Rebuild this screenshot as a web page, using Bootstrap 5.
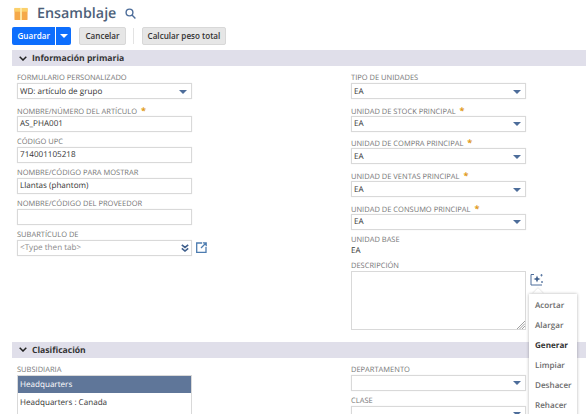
<!DOCTYPE html>
<html lang="es">
  <head>
    <meta charset="UTF-8" />
    <meta name="viewport" content="width=device-width, initial-scale=1.0" />
    <link href="https://cdn.jsdelivr.net/npm/bootstrap@5.3.3/dist/css/bootstrap.min.css" rel="stylesheet" />
    <title>Ensamblaje</title>
    <style>
      html, body { height: 414px; overflow: hidden; }
      body { font-family: "Open Sans", "Liberation Sans", sans-serif; font-size: 8px; color: #333; background: #fff; text-rendering: geometricPrecision; }
      .page-wrap { padding: 0 0 0 12px; position: relative; height: 414px; overflow: hidden; }
      .title-row { height: 27px; padding-left: 2px; gap: 9px; }
      .page-title { font-size: 14.3px; font-weight: 600; color: #4d5f79; margin: 0; line-height: 27px; }
      .btn-row { height: 18px; gap: 8px; }
      .btn-ns { font-family: inherit; font-size: 8.1px; font-weight: 600; line-height: 1; height: 18px; padding: 1px 5px 0; border-radius: 2px; border: 1px solid #d8d8d8; background: #e6e6e6; color: #333; }
      .btn-save { background: #0d6efd; border: 0; color: #fff; height: 18px; font-size: 8.1px; font-weight: 600; padding: 1px 5.5px 0; border-radius: 2px 0 0 2px; line-height: 1; }
      .btn-caret { background: #0d6efd; border: 0; border-left: 1px solid #fff; height: 18px; width: 16px; padding: 0; border-radius: 0 2px 2px 0; display: flex; align-items: center; justify-content: center; }
      .btn-sep { width: 1px; height: 16px; background: #e3e3e3; margin: 0 0 0 -1px; }
      .section-bar { height: 16px; background: #e0dfea; font-weight: 700; font-size: 8.6px; color: #333; gap: 5px; padding-left: 7px; }
      .section-name { padding-top: 1px; }
      .first-bar { margin-top: 5px; }
      .second-bar { margin-top: 11.5px; }
      .form-cols { padding-left: 5px; padding-top: 6px; }
      .col-left { width: 334px; flex: none; }
      .col-right { width: 205px; flex: none; }
      .ns-label { font-size: 7.5px; color: #757575; line-height: 13px; height: 11px; text-transform: uppercase; white-space: nowrap; }
      .ns-label-req { height: 12.7px; padding-top: .7px; }
      .ns-label b { color: #e09a1a; font-weight: 700; margin-left: 2px; font-size: 9px; }
      .ns-field { width: 175px; height: 16px; border: 1px solid #d9d9d9; box-shadow: 0 0 1px #e4e4e4; background: #fff; font-size: 8.1px; line-height: 14px; padding: 1px 2px 0; color: #333; white-space: nowrap; justify-content: space-between; align-items: center; display: flex; }
      .ns-group { margin-bottom: 4px; }
      .ns-arrow { width: 0; height: 0; border-left: 4px solid transparent; border-right: 4px solid transparent; border-top: 4px solid #4d6d9a; margin-right: 2px; }
      .ns-hint { color: #8a8a8a; }
      .ns-textarea { width: 175px; height: 59px; border: 1px solid #d9d9d9; position: relative; }
      .ns-grip { position: absolute; right: 0; bottom: 0; }
      .sub-list { width: 175px; border: 1px solid #d9d9d9; border-bottom: 0; height: 60px; }
      .sub-item { height: 17px; line-height: 18px; padding: 0 2px; font-size: 8.1px; }
      .sub-item-on { background: #5f7699; color: #fff; }
      .sub-item + .sub-item { line-height: 19px; height: 18px; }
      .ai-menu { position: absolute; left: 529px; top: 294px; width: 48px; height: 130px; background: #fff; box-shadow: 0 0 3px rgba(0,0,0,.3); padding: 2px 0 0 6px; font-size: 8.1px; font-weight: 600; color: #6b6b6b; }
      .ai-menu div { height: 20px; line-height: 20px; white-space: nowrap; }
      .ai-menu .ai-on { color: #333; font-weight: 700; }
      .ai-tip { position: absolute; left: 534px; top: 290px; width: 8px; height: 8px; background: #fff; transform: rotate(45deg); box-shadow: -1px -1px 1px rgba(0,0,0,.08); }
      .ai-icon { position: absolute; left: 530px; top: 273px; }
      .base-value { height: 15.5px; line-height: 11px; }
    </style>
  </head>
  <body>
    <div class="page-wrap">
      <div class="d-flex align-items-center title-row">
        <svg width="14" height="14" viewBox="0 0 15 15">
          <rect x="0.5" y="1" width="14" height="13" rx="1" fill="#f5a94a" />
          <rect x="0.5" y="1" width="14" height="4" fill="#fbd06a" />
          <rect x="6.5" y="1" width="2" height="13" fill="#fde9a8" />
        </svg>
        <h1 class="page-title">Ensamblaje</h1>
        <svg width="11" height="11" viewBox="0 0 11 11" fill="none" stroke="#4d6d9a" stroke-width="1.4">
          <circle cx="4.5" cy="4.5" r="3.4" />
          <path d="M7 7l3.4 3.4" />
        </svg>
      </div>
      <div class="d-flex align-items-center btn-row">
        <div class="d-flex">
          <button type="button" class="btn-save">Guardar</button>
          <button type="button" class="btn-caret" aria-label="Más">
            <svg width="8" height="4" viewBox="0 0 8 4"><path d="M0 0h8L4 4z" fill="#fff" /></svg>
          </button>
        </div>
        <button type="button" class="btn-ns">Cancelar</button>
        <span class="btn-sep"></span>
        <button type="button" class="btn-ns">Calcular peso total</button>
      </div>

      <div class="d-flex align-items-center section-bar first-bar">
        <svg width="8" height="5" viewBox="0 0 8 5" fill="none" stroke="#222" stroke-width="1.5"><path d="M.7.7L4 4l3.3-3.3" /></svg>
        <span class="section-name">Información primaria</span>
      </div>

      <div class="d-flex form-cols">
        <div class="col-left">
          <div class="ns-group">
            <div class="ns-label">Formulario personalizado</div>
            <div class="ns-field">WD: artículo de grupo<span class="ns-arrow"></span></div>
          </div>
          <div class="ns-group">
            <div class="ns-label ns-label-req">Nombre/número del artículo <b>*</b></div>
            <div class="ns-field">AS_PHA001</div>
          </div>
          <div class="ns-group">
            <div class="ns-label">Código UPC</div>
            <div class="ns-field">714001105218</div>
          </div>
          <div class="ns-group">
            <div class="ns-label">Nombre/código para mostrar</div>
            <div class="ns-field">Llantas (phantom)</div>
          </div>
          <div class="ns-group">
            <div class="ns-label">Nombre/código del proveedor</div>
            <div class="ns-field"></div>
          </div>
          <div class="ns-group">
            <div class="ns-label">Subartículo de</div>
            <div class="d-flex align-items-center gap-1">
              <div class="ns-field"><span class="ns-hint">&lt;Type then tab&gt;</span>
                <svg width="8" height="8" viewBox="0 0 8 8" fill="none" stroke="#3f5f8c" stroke-width="1.6"><path d="M.8.8L4 3.4 7.2.8M.8 4.4L4 7 7.2 4.4" /></svg>
              </div>
              <svg width="11" height="11" viewBox="0 0 11 11" fill="none" stroke="#4d7cb0" stroke-width="1.3"><path d="M6 1H.7v9.3H10V5M5 6l5-5M6.8 .8h3.4v3.4" /></svg>
            </div>
          </div>
        </div>
        <div class="col-right">
          <div class="ns-group">
            <div class="ns-label">Tipo de unidades</div>
            <div class="ns-field">EA<span class="ns-arrow"></span></div>
          </div>
          <div class="ns-group">
            <div class="ns-label ns-label-req">Unidad de stock principal <b>*</b></div>
            <div class="ns-field">EA<span class="ns-arrow"></span></div>
          </div>
          <div class="ns-group">
            <div class="ns-label ns-label-req">Unidad de compra principal <b>*</b></div>
            <div class="ns-field">EA<span class="ns-arrow"></span></div>
          </div>
          <div class="ns-group">
            <div class="ns-label ns-label-req">Unidad de ventas principal <b>*</b></div>
            <div class="ns-field">EA<span class="ns-arrow"></span></div>
          </div>
          <div class="ns-group">
            <div class="ns-label ns-label-req">Unidad de consumo principal <b>*</b></div>
            <div class="ns-field">EA<span class="ns-arrow"></span></div>
          </div>
          <div class="ns-label">Unidad base</div>
          <div class="base-value">EA</div>
          <div class="ns-label">Descripción</div>
          <div class="ns-textarea">
            <svg class="ns-grip" width="9" height="9" viewBox="0 0 9 9" stroke="#777" stroke-width=".7"><path d="M9 1L1 9M9 3.5L3.5 9M9 6L6 9" /></svg>
          </div>
        </div>
      </div>

      <div class="d-flex align-items-center section-bar second-bar">
        <svg width="8" height="5" viewBox="0 0 8 5" fill="none" stroke="#222" stroke-width="1.5"><path d="M.7.7L4 4l3.3-3.3" /></svg>
        <span class="section-name">Clasificación</span>
      </div>

      <div class="d-flex form-cols">
        <div class="col-left">
          <div class="ns-label">Subsidiaria</div>
          <div class="sub-list">
            <div class="sub-item sub-item-on">Headquarters</div>
            <div class="sub-item">Headquarters : Canada</div>
          </div>
        </div>
        <div class="col-right">
          <div class="ns-group">
            <div class="ns-label">Departamento</div>
            <div class="ns-field"><span></span><span class="ns-arrow"></span></div>
          </div>
          <div class="ns-group">
            <div class="ns-label">Clase</div>
            <div class="ns-field"><span></span><span class="ns-arrow"></span></div>
          </div>
        </div>
      </div>

      <svg class="ai-icon" width="14" height="14" viewBox="0 0 14 14" fill="none" stroke="#4d6d9a" stroke-width="1">
        <path d="M4 1.5H1v10.5h11" />
        <path d="M7 2.5l1 2.5 2.5 1-2.5 1-1 2.5-1-2.5-2.5-1 2.5-1z" fill="#3f5f8c" stroke="none" />
        <path d="M11.5 1v2.5M10.3 2.2h2.4M12 8v2M11 9h2" stroke-width=".8" />
      </svg>
      <div class="ai-tip"></div>
      <div class="ai-menu">
        <div>Acortar</div>
        <div>Alargar</div>
        <div class="ai-on">Generar</div>
        <div>Limpiar</div>
        <div>Deshacer</div>
        <div>Rehacer</div>
      </div>
    </div>
  </body>
</html>
